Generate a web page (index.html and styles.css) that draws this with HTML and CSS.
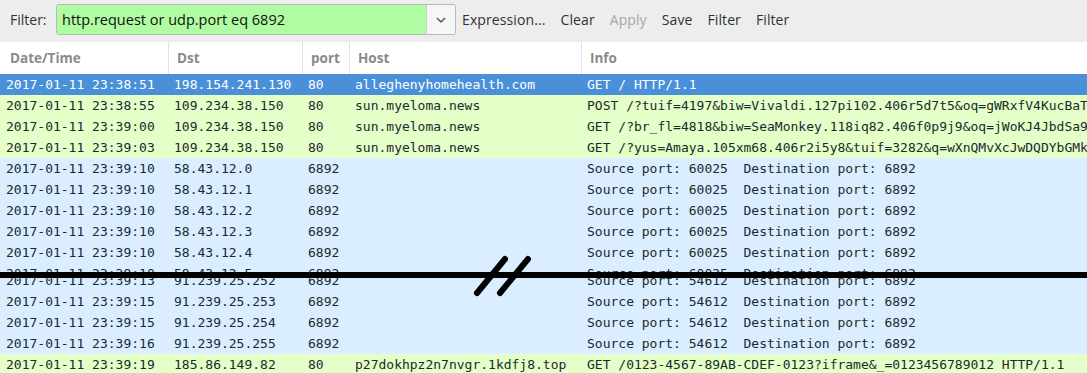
FILE: index.html
```html
<!DOCTYPE html>
<html lang="en">
<head>
  <meta charset="UTF-8">
  <title>Packet list</title>
  <link rel="stylesheet" href="styles.css">
</head>
<body>

<!-- Barra de filtro -->
<div class="toolbar">
  <span class="label">Filter:</span>
  <div class="combo">
    <div class="combo-text">http.request or udp.port eq 6892</div>
    <div class="combo-btn">
      <svg width="12" height="8" viewBox="0 0 12 8"><path d="M2 2 L6 6 L10 2" fill="none" stroke="#555" stroke-width="1.5"/></svg>
    </div>
  </div>
  <span class="tb-btn">Expression...</span>
  <span class="tb-btn">Clear</span>
  <span class="tb-btn disabled">Apply</span>
  <span class="tb-btn">Save</span>
  <span class="tb-btn">Filter</span>
  <span class="tb-btn">Filter</span>
</div>

<div class="list">
  <div class="head">
    <div class="c c-date">Date/Time</div>
    <div class="c c-dst">Dst</div>
    <div class="c c-port">port</div>
    <div class="c c-host">Host</div>
    <div class="c c-info">Info</div>
  </div>

  <div class="row selected">
    <div class="c c-date">2017-01-11 23:38:51</div>
    <div class="c c-dst">198.154.241.130</div>
    <div class="c c-port">80</div>
    <div class="c c-host">alleghenyhomehealth.com</div>
    <div class="c c-info">GET / HTTP/1.1</div>
  </div>
  <div class="row http">
    <div class="c c-date">2017-01-11 23:38:55</div>
    <div class="c c-dst">109.234.38.150</div>
    <div class="c c-port">80</div>
    <div class="c c-host">sun.myeloma.news</div>
    <div class="c c-info">POST /?tuif=4197&amp;biw=Vivaldi.127pi102.406r5d7t5&amp;oq=gWRxfV4KucBaT3kq HTTP/1.1</div>
  </div>
  <div class="row http">
    <div class="c c-date">2017-01-11 23:39:00</div>
    <div class="c c-dst">109.234.38.150</div>
    <div class="c c-port">80</div>
    <div class="c c-host">sun.myeloma.news</div>
    <div class="c c-info">GET /?br_fl=4818&amp;biw=SeaMonkey.118iq82.406f0p9j9&amp;oq=jWoKJ4JbdSa9Qz HTTP/1.1</div>
  </div>
  <div class="row http">
    <div class="c c-date">2017-01-11 23:39:03</div>
    <div class="c c-dst">109.234.38.150</div>
    <div class="c c-port">80</div>
    <div class="c c-host">sun.myeloma.news</div>
    <div class="c c-info">GET /?yus=Amaya.105xm68.406r2i5y8&amp;tuif=3282&amp;q=wXnQMvXcJwDQDYbGMk HTTP/1.1</div>
  </div>
  <div class="row udp">
    <div class="c c-date">2017-01-11 23:39:10</div>
    <div class="c c-dst">58.43.12.0</div>
    <div class="c c-port">6892</div>
    <div class="c c-host"></div>
    <div class="c c-info">Source port: 60025  Destination port: 6892</div>
  </div>
  <div class="row udp">
    <div class="c c-date">2017-01-11 23:39:10</div>
    <div class="c c-dst">58.43.12.1</div>
    <div class="c c-port">6892</div>
    <div class="c c-host"></div>
    <div class="c c-info">Source port: 60025  Destination port: 6892</div>
  </div>
  <div class="row udp">
    <div class="c c-date">2017-01-11 23:39:10</div>
    <div class="c c-dst">58.43.12.2</div>
    <div class="c c-port">6892</div>
    <div class="c c-host"></div>
    <div class="c c-info">Source port: 60025  Destination port: 6892</div>
  </div>
  <div class="row udp">
    <div class="c c-date">2017-01-11 23:39:10</div>
    <div class="c c-dst">58.43.12.3</div>
    <div class="c c-port">6892</div>
    <div class="c c-host"></div>
    <div class="c c-info">Source port: 60025  Destination port: 6892</div>
  </div>
  <div class="row udp">
    <div class="c c-date">2017-01-11 23:39:10</div>
    <div class="c c-dst">58.43.12.4</div>
    <div class="c c-port">6892</div>
    <div class="c c-host"></div>
    <div class="c c-info">Source port: 60025  Destination port: 6892</div>
  </div>

  <!-- Corte: filas omitidas -->
  <div class="cut">
    <div class="cut-top">
      <div class="row udp">
        <div class="c c-date">2017-01-11 23:39:10</div>
        <div class="c c-dst">58.43.12.5</div>
        <div class="c c-port">6892</div>
        <div class="c c-host"></div>
        <div class="c c-info">Source port: 60025  Destination port: 6892</div>
      </div>
    </div>
    <div class="cut-line"></div>
    <div class="cut-bottom">
      <div class="row udp">
        <div class="c c-date">2017-01-11 23:39:13</div>
        <div class="c c-dst">91.239.25.252</div>
        <div class="c c-port">6892</div>
        <div class="c c-host"></div>
        <div class="c c-info">Source port: 54612  Destination port: 6892</div>
      </div>
    </div>
    <svg class="cut-mark" width="70" height="46" viewBox="0 0 70 46">
      <path d="M9 40 L37 6 M32 40 L60 6" stroke="#000" stroke-width="6" stroke-linecap="round"/>
    </svg>
  </div>

  <div class="row udp">
    <div class="c c-date">2017-01-11 23:39:15</div>
    <div class="c c-dst">91.239.25.253</div>
    <div class="c c-port">6892</div>
    <div class="c c-host"></div>
    <div class="c c-info">Source port: 54612  Destination port: 6892</div>
  </div>
  <div class="row udp">
    <div class="c c-date">2017-01-11 23:39:15</div>
    <div class="c c-dst">91.239.25.254</div>
    <div class="c c-port">6892</div>
    <div class="c c-host"></div>
    <div class="c c-info">Source port: 54612  Destination port: 6892</div>
  </div>
  <div class="row udp">
    <div class="c c-date">2017-01-11 23:39:16</div>
    <div class="c c-dst">91.239.25.255</div>
    <div class="c c-port">6892</div>
    <div class="c c-host"></div>
    <div class="c c-info">Source port: 54612  Destination port: 6892</div>
  </div>
  <div class="row http">
    <div class="c c-date">2017-01-11 23:39:19</div>
    <div class="c c-dst">185.86.149.82</div>
    <div class="c c-port">80</div>
    <div class="c c-host">p27dokhpz2n7nvgr.1kdfj8.top</div>
    <div class="c c-info">GET /0123-4567-89AB-CDEF-0123?iframe&amp;_=0123456789012 HTTP/1.1</div>
  </div>
</div>

</body>
</html>
```

FILE: styles.css
```css
body {
  margin: 0;
  font-family: "Open Sans", "Noto Sans", sans-serif;
  background-color: #daeeff;
  overflow: hidden;
}

/* Barra de filtro */
.toolbar {
  display: flex;
  align-items: center;
  height: 42px;
  background-color: #ededed;
  font-size: 14px;
  color: #2e3436;
  padding-left: 10px;
  box-sizing: border-box;
}

.label {
  width: 46px;
  margin-top: -3px;
}

.combo {
  display: flex;
  width: 400px;
  height: 31px;
  margin-top: -3px;
  border: 1px solid #b8b8b8;
  border-radius: 3px;
  box-sizing: border-box;
  overflow: hidden;
}

.combo-text {
  flex: 1;
  background-color: #affca2;
  padding-left: 5px;
  line-height: 29px;
  font-size: 14.5px;
  color: #111;
}

.combo-btn {
  width: 28px;
  border-left: 1px solid #d0d0d0;
  background-color: #f6f6f6;
  display: flex;
  align-items: center;
  justify-content: center;
}

.tb-btn {
  margin-left: 6px;
  margin-right: 8px;
  margin-top: -3px;
  letter-spacing: 0.1px;
}

.tb-btn + .tb-btn {
  margin-left: 7px;
}

.tb-btn.disabled {
  color: #a6a6a6;
}

/* Lista de paquetes */
.list {
  font-family: "DejaVu Sans Mono", monospace;
  font-size: 13px;
}

.head {
  display: flex;
  height: 32px;
  background-color: #fff;
  font-family: "Open Sans", "Noto Sans", sans-serif;
  font-weight: bold;
  color: #8a8a8a;
  font-size: 13.5px;
}

.head .c {
  line-height: 32px;
  padding-left: 8px;
  border-left: 1px solid #e2e2e2;
}

.head .c:first-child {
  border-left: none;
  padding-left: 10px;
}

.row {
  display: flex;
  height: 21px;
  line-height: 21px;
  color: #1b2a2e;
  white-space: pre;
}

.row .c {
  padding-left: 6px;
  overflow: hidden;
}

.c {
  box-sizing: border-box;
}

.c-date { width: 168px; }
.c-dst { width: 134px; }
.c-port { width: 47px; }
.c-host { width: 232px; }
.c-info { flex: 1; }

.selected {
  background-color: #4a90d9;
  color: #fff;
}

.http {
  background-color: #e4ffc7;
}

.udp {
  background-color: #daeeff;
}

/* Corte entre filas */
.cut {
  position: relative;
}

.cut-top {
  height: 9px;
  overflow: hidden;
}

.cut-line {
  height: 6px;
  background-color: #000;
}

.cut-bottom {
  height: 13px;
  overflow: hidden;
}

.cut-bottom .row {
  margin-top: -8px;
}

.cut-mark {
  position: absolute;
  left: 468px;
  top: -10px;
}
```
